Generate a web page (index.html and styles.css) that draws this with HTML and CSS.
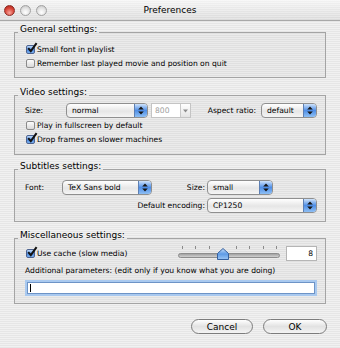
FILE: index.html
```html
<!DOCTYPE html>
<html lang="en">
<head>
    <meta charset="UTF-8">
    <meta name="viewport" content="width=device-width, initial-scale=1.0">
    <title>Preferences</title>
    <link rel="stylesheet" href="styles.css">
</head>
<body>
    <div class="window">
        <div class="titlebar">
            <div class="lights">
                <span class="light close"></span>
                <span class="light"></span>
                <span class="light"></span>
            </div>
            <div class="title">Preferences</div>
        </div>

        <div class="content">
            <!-- General -->
            <fieldset class="group general">
                <legend>General settings:</legend>
                <div class="group-body">
                    <div class="row check-row">
                        <span class="cb checked"><svg class="tick" width="12" height="12" viewBox="0 0 12 12"><path d="M2.2 6.2 L4.8 9.2 L10.6 1.2" fill="none" stroke="#111" stroke-width="2"/></svg></span>
                        <span>Small font in playlist</span>
                    </div>
                    <div class="row check-row">
                        <span class="cb"></span>
                        <span>Remember last played movie and position on quit</span>
                    </div>
                </div>
            </fieldset>

            <!-- Video -->
            <fieldset class="group video">
                <legend>Video settings:</legend>
                <div class="group-body">
                    <div class="row popup-row">
                        <span class="lbl size-lbl">Size:</span>
                        <div class="popup w-size">
                            <span class="val">normal</span>
                            <span class="arrows"><svg width="8" height="11" viewBox="0 0 8 11"><path d="M4 1.5 L6.8 4.6 L1.2 4.6 Z M1.2 6.4 L6.8 6.4 L4 9.5 Z" fill="#151515"/></svg></span>
                        </div>
                        <div class="combo">
                            <span class="combo-val">800</span>
                            <span class="combo-btn"><svg width="5" height="4" viewBox="0 0 5 4"><path d="M0 0.5 L5 0.5 L2.5 3.5 Z" fill="#8c8c8c"/></svg></span>
                        </div>
                        <span class="lbl aspect-lbl">Aspect ratio:</span>
                        <div class="popup w-aspect">
                            <span class="val">default</span>
                            <span class="arrows"><svg width="8" height="11" viewBox="0 0 8 11"><path d="M4 1.5 L6.8 4.6 L1.2 4.6 Z M1.2 6.4 L6.8 6.4 L4 9.5 Z" fill="#151515"/></svg></span>
                        </div>
                    </div>
                    <div class="row check-row">
                        <span class="cb"></span>
                        <span>Play in fullscreen by default</span>
                    </div>
                    <div class="row check-row">
                        <span class="cb checked"><svg class="tick" width="12" height="12" viewBox="0 0 12 12"><path d="M2.2 6.2 L4.8 9.2 L10.6 1.2" fill="none" stroke="#111" stroke-width="2"/></svg></span>
                        <span>Drop frames on slower machines</span>
                    </div>
                </div>
            </fieldset>

            <!-- Subtitles -->
            <fieldset class="group subtitles">
                <legend>Subtitles settings:</legend>
                <div class="group-body sub-grid">
                    <span class="lbl">Font:</span>
                    <div class="popup w-font">
                        <span class="val">TeX Sans bold</span>
                        <span class="arrows"><svg width="8" height="11" viewBox="0 0 8 11"><path d="M4 1.5 L6.8 4.6 L1.2 4.6 Z M1.2 6.4 L6.8 6.4 L4 9.5 Z" fill="#151515"/></svg></span>
                    </div>
                    <span class="lbl right">Size:</span>
                    <div class="popup w-subsize">
                        <span class="val">small</span>
                        <span class="arrows"><svg width="8" height="11" viewBox="0 0 8 11"><path d="M4 1.5 L6.8 4.6 L1.2 4.6 Z M1.2 6.4 L6.8 6.4 L4 9.5 Z" fill="#151515"/></svg></span>
                    </div>
                    <span class="lbl right encoding-lbl">Default encoding:</span>
                    <div class="popup w-encoding">
                        <span class="val">CP1250</span>
                        <span class="arrows"><svg width="8" height="11" viewBox="0 0 8 11"><path d="M4 1.5 L6.8 4.6 L1.2 4.6 Z M1.2 6.4 L6.8 6.4 L4 9.5 Z" fill="#151515"/></svg></span>
                    </div>
                </div>
            </fieldset>

            <!-- Misc -->
            <fieldset class="group misc">
                <legend>Miscellaneous settings:</legend>
                <div class="group-body">
                    <div class="row check-row">
                        <span class="cb checked"><svg class="tick" width="12" height="12" viewBox="0 0 12 12"><path d="M2.2 6.2 L4.8 9.2 L10.6 1.2" fill="none" stroke="#111" stroke-width="2"/></svg></span>
                        <span>Use cache (slow media)</span>
                        <svg class="slider" width="102" height="16" viewBox="0 0 102 16">
                            <defs>
                                <linearGradient id="track" x1="0" y1="0" x2="0" y2="1">
                                    <stop offset="0" stop-color="#9a9a9a"/>
                                    <stop offset="1" stop-color="#d8d8d8"/>
                                </linearGradient>
                                <linearGradient id="thumb" x1="0" y1="0" x2="0" y2="1">
                                    <stop offset="0" stop-color="#c9e0fb"/>
                                    <stop offset="0.5" stop-color="#5d9ae6"/>
                                    <stop offset="1" stop-color="#9cc6f5"/>
                                </linearGradient>
                            </defs>
                            <g stroke="#8a8a8a" stroke-width="1">
                                <line x1="4.5" y1="1" x2="4.5" y2="4"/>
                                <line x1="17.5" y1="1" x2="17.5" y2="4"/>
                                <line x1="31.5" y1="1" x2="31.5" y2="4"/>
                                <line x1="58.5" y1="1" x2="58.5" y2="4"/>
                                <line x1="71.5" y1="1" x2="71.5" y2="4"/>
                                <line x1="85.5" y1="1" x2="85.5" y2="4"/>
                                <line x1="98.5" y1="1" x2="98.5" y2="4"/>
                            </g>
                            <rect x="0.5" y="8.5" width="101" height="4" rx="2" fill="url(#track)" stroke="#8d8d8d"/>
                            <path d="M45 3.5 L50.5 8.5 L50.5 14.5 L39.5 14.5 L39.5 8.5 Z" fill="url(#thumb)" stroke="#35609e"/>
                        </svg>
                        <span class="num-field">8</span>
                    </div>
                    <div class="row text-row">Additional parameters: (edit only if you know what you are doing)</div>
                    <div class="text-field"><span class="caret"></span></div>
                </div>
            </fieldset>

            <div class="buttons">
                <button class="aqua cancel">Cancel</button>
                <button class="aqua ok">OK</button>
            </div>
        </div>
    </div>
</body>
</html>
```

FILE: styles.css
```css
body {
    margin: 0;
    font-family: "DejaVu Sans", sans-serif;
    font-size: 7.6px;
    color: #000;
}
.window {
    width: 340px;
    height: 348px;
    overflow: hidden;
    background: repeating-linear-gradient(to bottom, #f1f1f1 0 1px, #e6e6e6 1px 2px);
}

/* title bar */
.titlebar {
    height: 20px;
    border-bottom: 1px solid #a8a8a8;
    display: grid;
    grid-template-columns: 1fr auto 1fr;
    align-items: center;
    background: linear-gradient(rgba(255,255,255,0.5), rgba(0,0,0,0.05)),
                repeating-linear-gradient(to bottom, #f1f1f1 0 1px, #e6e6e6 1px 2px);
}
.lights {
    display: flex;
    gap: 5px;
    padding-left: 4px;
}
.light {
    width: 9px;
    height: 9px;
    border-radius: 50%;
    border: 1px solid #a2a2a2;
    background: radial-gradient(circle at 50% 70%, #ffffff, #e2e2e2 55%, #bdbdbd);
}
.light.close {
    border-color: #8c2a22;
    background: radial-gradient(circle at 50% 75%, #f7a59b, #d9463a 55%, #a9241a);
}
.title {
    font-size: 9px;
}

/* groups */
.content {
    padding: 3px 14px 0;
}
.group {
    margin: 0;
    padding: 0 0 0 3px;
    border: 1px solid #a4a4a4;
    background: rgba(0,0,0,0.025);
    min-width: 0;
}
.group legend {
    padding: 0 2px 6px;
    font-size: 9px;
    line-height: 10px;
}
.group-body {
    padding: 2px 8px 7px 7px;
}
.video {
    margin-top: 9px;
}
.video .group-body {
    padding-top: 0;
    padding-bottom: 8px;
}
.subtitles {
    margin-top: 6px;
}
.misc {
    margin-top: 8px;
}
.misc .group-body {
    padding-top: 0;
    padding-bottom: 9px;
}

.row {
    display: flex;
    align-items: center;
    height: 14px;
}
.popup-row {
    height: 15px;
}
.check-row {
    gap: 2px;
    padding-left: 1px;
}

/* checkbox */
.cb {
    position: relative;
    width: 7px;
    height: 7px;
    flex: none;
    border: 1px solid #8a8a8a;
    border-radius: 2px;
    background: linear-gradient(#fdfdfd, #d9d9d9);
}
.cb.checked {
    border-color: #4c6290;
    background: linear-gradient(#c3ddfb, #4b8ae2 55%, #7db2f0);
}
.tick {
    position: absolute;
    left: -1px;
    top: -4px;
}

/* popup buttons */
.popup {
    display: flex;
    align-items: center;
    height: 13px;
    border: 1px solid #8f8f8f;
    border-radius: 4px;
    background: linear-gradient(#ffffff, #e6e6e6 55%, #f5f5f5);
    overflow: hidden;
    flex: none;
    box-sizing: content-box;
}
.popup .val {
    flex: 1;
    padding-left: 5px;
    white-space: nowrap;
}
.popup .arrows {
    width: 12px;
    height: 13px;
    display: flex;
    align-items: center;
    justify-content: center;
    border-left: 1px solid #5d7fb3;
    background: linear-gradient(#cfe3fb, #4f8ee6 50%, #8ebff4);
}
.w-size { width: 80px; }
.w-aspect { width: 54px; }
.w-font { width: 88px; }
.w-subsize { width: 64px; }
.w-encoding { width: 108px; }

.lbl {
    white-space: nowrap;
}
.size-lbl {
    width: 41px;
}
.aspect-lbl {
    margin-left: auto;
    margin-right: 5px;
}

/* disabled combo */
.combo {
    display: flex;
    height: 13px;
    margin-left: 3px;
    border: 1px solid #c4c4c4;
    background: #fff;
}
.combo-val {
    width: 25px;
    padding-left: 3px;
    color: #a0a0a0;
    line-height: 13px;
}
.combo-btn {
    width: 9px;
    display: flex;
    align-items: center;
    justify-content: center;
    border-left: 1px solid #c9c9c9;
    background: linear-gradient(#ffffff, #e4e4e4);
}

/* subtitles grid */
.sub-grid {
    display: grid;
    grid-template-columns: 37px 90px 1fr 110px;
    grid-auto-rows: 18px;
    align-items: center;
    padding-top: 1px;
}
.sub-grid .right {
    text-align: right;
    padding-right: 2px;
}
.encoding-lbl {
    grid-column: 1 / 4;
}

/* misc */
.slider {
    margin-left: auto;
    flex: none;
}
.num-field {
    width: 26px;
    height: 13px;
    margin-left: 4px;
    padding-right: 3px;
    border: 1px solid #b5b5b5;
    background: #fff;
    text-align: right;
    line-height: 13px;
}
.text-row {
    margin-top: 3px;
}
.text-field {
    height: 10px;
    margin: 5px 2px 0;
    border: 1px solid #6d93c6;
    background: #fff;
    box-shadow: 0 0 0 2px #a9c9ef;
    display: flex;
    align-items: center;
    padding-left: 2px;
}
.caret {
    width: 1px;
    height: 8px;
    background: #000;
}

/* buttons */
.buttons {
    display: flex;
    justify-content: flex-end;
    gap: 10px;
    margin-top: 15px;
    padding-right: 0;
    margin-right: -1px;
}
.aqua {
    height: 15px;
    padding: 0;
    border: 1px solid #7c7c7c;
    border-radius: 8px;
    background: linear-gradient(#ffffff, #e2e2e2 50%, #f4f4f4);
    font-family: "DejaVu Sans", sans-serif;
    font-size: 9px;
    color: #000;
}
.cancel { width: 62px; }
.ok { width: 64px; }
```
